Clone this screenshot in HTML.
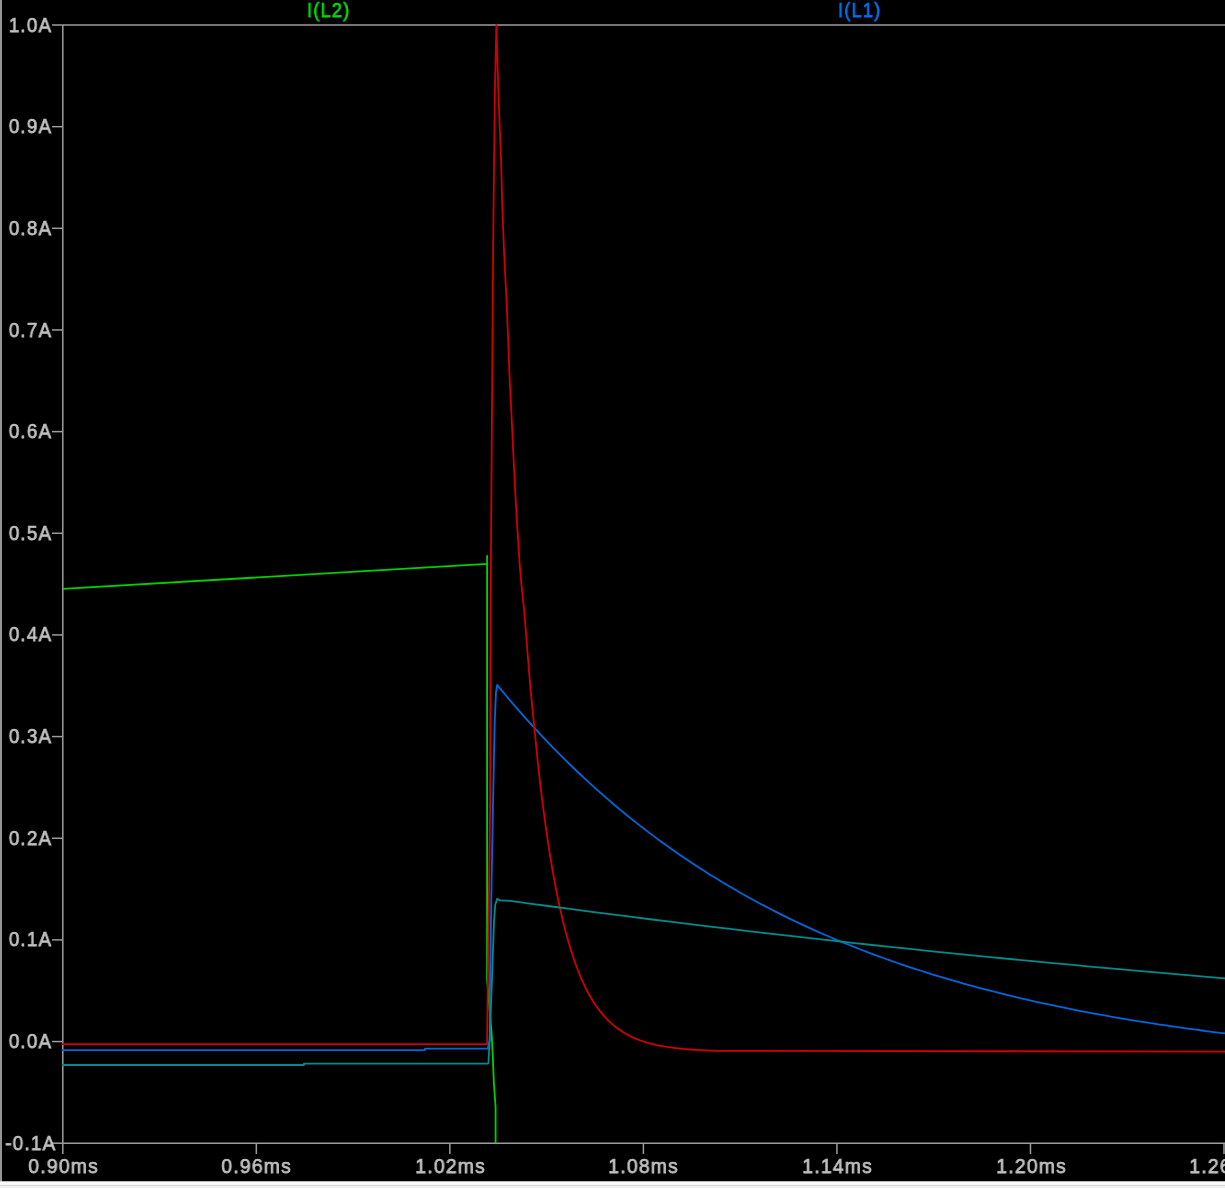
<!DOCTYPE html>
<html><head><meta charset="utf-8"><style>
html,body{margin:0;padding:0;background:#000;width:1225px;height:1188px;overflow:hidden;position:relative}
.yl,.xl,.tl{position:absolute;font-family:"Liberation Sans",sans-serif;font-weight:normal;font-size:21px;line-height:30px;letter-spacing:1.3px;white-space:nowrap;color:#c0c0c0;will-change:transform;-webkit-text-stroke:0.75px #c0c0c0}
.yl{left:0;width:52.3px;text-align:right;transform-origin:100% 50%;transform:scaleX(0.9)}
.xl{top:1151px;width:120px;text-align:center;transform:scaleX(0.92);text-indent:1.3px}
.tl{top:-5px;transform-origin:0 50%;transform:scaleX(0.87);-webkit-text-stroke-color:currentColor}
</style></head><body>
<svg width="1225" height="1188" viewBox="0 0 1225 1188" style="position:absolute;left:0;top:0"><rect x="0" y="0" width="1225" height="1188" fill="#000"/><rect x="0" y="0" width="2" height="1182" fill="#969696"/><rect x="0" y="1181.5" width="1225" height="6.5" fill="#f0f0f0"/><rect x="0" y="1181.5" width="1225" height="3" fill="#fafafa"/><rect x="0" y="1185" width="1225" height="1" fill="#d8d8d8"/><g stroke="#9c9c9c" stroke-width="1.5" fill="none"><line x1="62.8" y1="25.0" x2="1225" y2="25.0"/><line x1="62.8" y1="1143.2" x2="1225" y2="1143.2"/><line x1="62.8" y1="25.0" x2="62.8" y2="1154"/><line x1="52" y1="25.00" x2="62.8" y2="25.00"/><line x1="52" y1="126.65" x2="62.8" y2="126.65"/><line x1="52" y1="228.31" x2="62.8" y2="228.31"/><line x1="52" y1="329.96" x2="62.8" y2="329.96"/><line x1="52" y1="431.62" x2="62.8" y2="431.62"/><line x1="52" y1="533.27" x2="62.8" y2="533.27"/><line x1="52" y1="634.93" x2="62.8" y2="634.93"/><line x1="52" y1="736.58" x2="62.8" y2="736.58"/><line x1="52" y1="838.24" x2="62.8" y2="838.24"/><line x1="52" y1="939.89" x2="62.8" y2="939.89"/><line x1="52" y1="1041.55" x2="62.8" y2="1041.55"/><line x1="52" y1="1143.20" x2="62.8" y2="1143.20"/><line x1="256.33" y1="1143.2" x2="256.33" y2="1154"/><line x1="449.87" y1="1143.2" x2="449.87" y2="1154"/><line x1="643.40" y1="1143.2" x2="643.40" y2="1154"/><line x1="836.93" y1="1143.2" x2="836.93" y2="1154"/><line x1="1030.47" y1="1143.2" x2="1030.47" y2="1154"/><line x1="1224.00" y1="1143.2" x2="1224.00" y2="1154"/></g><g fill="none" stroke-width="1.8" stroke-linejoin="round"><polyline stroke="#00d000" points="62.80,588.90 487.10,563.90 487.10,555.80 487.10,979.80 491.60,1033.60 492.80,1056.00 493.80,1082.00 495.60,1107.00 495.60,1143.00"/><polyline stroke="#0066dc" points="62.00,1050.10 425.00,1050.10 425.00,1048.60 487.70,1048.60 489.80,1040.00 489.80,995.00 490.50,950.00 491.60,880.00 493.30,790.00 494.60,725.00 496.00,692.00 497.20,684.89 500.00,688.31 506.00,695.53 512.00,702.61 518.00,709.56 524.00,716.38 530.00,723.07 536.00,729.64 542.00,736.08 548.00,742.40 554.00,748.60 560.00,754.68 566.00,760.65 572.00,766.51 578.00,772.26 584.00,777.90 590.00,783.43 596.00,788.86 602.00,794.19 608.00,799.42 614.00,804.55 620.00,809.58 626.00,814.52 632.00,819.36 638.00,824.11 644.00,828.78 650.00,833.35 656.00,837.85 662.00,842.25 668.00,846.57 674.00,850.82 680.00,854.98 686.00,859.06 692.00,863.07 698.00,867.00 704.00,870.86 710.00,874.64 716.00,878.36 722.00,882.00 728.00,885.58 734.00,889.09 740.00,892.53 746.00,895.91 752.00,899.22 758.00,902.47 764.00,905.66 770.00,908.79 776.00,911.87 782.00,914.88 788.00,917.84 794.00,920.74 800.00,923.58 806.00,926.38 812.00,929.12 818.00,931.81 824.00,934.45 830.00,937.04 836.00,939.58 842.00,942.07 848.00,944.52 854.00,946.92 860.00,949.27 866.00,951.58 872.00,953.85 878.00,956.07 884.00,958.25 890.00,960.40 896.00,962.50 902.00,964.56 908.00,966.58 914.00,968.57 920.00,970.51 926.00,972.42 932.00,974.30 938.00,976.14 944.00,977.94 950.00,979.72 956.00,981.45 962.00,983.16 968.00,984.83 974.00,986.47 980.00,988.08 986.00,989.66 992.00,991.21 998.00,992.74 1004.00,994.23 1010.00,995.69 1016.00,997.13 1022.00,998.54 1028.00,999.92 1034.00,1001.28 1040.00,1002.61 1046.00,1003.92 1052.00,1005.20 1058.00,1006.46 1064.00,1007.70 1070.00,1008.91 1076.00,1010.10 1082.00,1011.26 1088.00,1012.41 1094.00,1013.53 1100.00,1014.63 1106.00,1015.71 1112.00,1016.77 1118.00,1017.82 1124.00,1018.84 1130.00,1019.84 1136.00,1020.82 1142.00,1021.79 1148.00,1022.73 1154.00,1023.66 1160.00,1024.57 1166.00,1025.47 1172.00,1026.34 1178.00,1027.20 1184.00,1028.05 1190.00,1028.88 1196.00,1029.69 1202.00,1030.49 1208.00,1031.27 1214.00,1032.04 1220.00,1032.79 1225.00,1033.41"/><polyline stroke="#d00000" points="62.00,1044.10 487.10,1044.10 487.60,1000.00 488.50,930.00 490.20,800.00 490.60,600.00 491.70,450.00 493.20,240.00 494.90,90.00 496.40,25.00 497.80,73.50 499.40,118.50 501.10,160.50 502.20,204.00 503.70,243.50 505.20,275.00 506.70,303.50 508.10,338.00 509.60,378.00 511.30,410.50 512.60,438.50 514.00,467.00 515.30,493.00 516.80,519.00 518.30,542.50 519.60,563.50 521.50,585.00 524.30,611.50 527.50,652.00 530.50,689.00 534.40,728.00 538.00,764.30 540.50,786.12 543.00,806.28 545.50,824.91 548.00,842.12 550.50,858.03 553.00,872.74 555.50,886.32 558.00,898.88 560.50,910.49 563.00,921.21 565.50,931.12 568.00,940.28 570.50,948.74 573.00,956.57 575.50,963.79 578.00,970.47 580.50,976.65 583.00,982.35 585.50,987.62 588.00,992.50 590.50,997.00 593.00,1001.16 595.50,1005.01 598.00,1008.56 600.50,1011.84 605.50,1017.68 610.50,1022.67 615.50,1026.93 620.50,1030.57 625.50,1033.67 630.50,1036.33 635.50,1038.59 640.50,1040.53 645.50,1042.18 650.50,1043.59 655.50,1044.80 660.50,1045.83 665.50,1046.71 670.50,1047.46 675.50,1048.10 680.50,1048.65 685.50,1049.11 690.50,1049.51 695.50,1049.85 700.50,1050.15 705.50,1050.39 710.50,1050.61 715.50,1050.79 1225.00,1051.60"/><polyline stroke="#008c8c" points="62.00,1065.00 304.00,1065.00 304.00,1063.60 487.70,1063.60 488.40,1063.00 489.40,1045.00 491.20,1000.00 493.00,950.00 494.00,922.00 495.20,905.00 497.20,898.80 500.00,900.40 510.00,900.78 530.00,903.53 550.00,906.24 570.00,908.92 590.00,911.55 610.00,914.15 630.00,916.71 650.00,919.24 670.00,921.72 690.00,924.18 710.00,926.60 730.00,928.98 750.00,931.33 770.00,933.65 790.00,935.93 810.00,938.18 830.00,940.40 850.00,942.59 870.00,944.74 890.00,946.87 910.00,948.96 930.00,951.03 950.00,953.07 970.00,955.07 990.00,957.05 1010.00,959.00 1030.00,960.92 1050.00,962.82 1070.00,964.69 1090.00,966.53 1110.00,968.35 1130.00,970.14 1150.00,971.90 1170.00,973.64 1190.00,975.35 1210.00,977.04 1225.00,978.29"/></g></svg>
<div class="yl" style="top:9.5px">1.0A</div><div class="yl" style="top:111.2px">0.9A</div><div class="yl" style="top:212.8px">0.8A</div><div class="yl" style="top:314.5px">0.7A</div><div class="yl" style="top:416.1px">0.6A</div><div class="yl" style="top:517.8px">0.5A</div><div class="yl" style="top:619.4px">0.4A</div><div class="yl" style="top:721.1px">0.3A</div><div class="yl" style="top:822.7px">0.2A</div><div class="yl" style="top:924.4px">0.1A</div><div class="yl" style="top:1026.0px">0.0A</div><div class="yl" style="top:1127.7px">-0.1A</div><div class="xl" style="left:2.8px">0.90ms</div><div class="xl" style="left:196.3px">0.96ms</div><div class="xl" style="left:389.9px">1.02ms</div><div class="xl" style="left:583.4px">1.08ms</div><div class="xl" style="left:776.9px">1.14ms</div><div class="xl" style="left:970.5px">1.20ms</div><div class="xl" style="left:1164.0px">1.26ms</div><div class="tl" style="left:307px;color:#00dc00">I(L2)</div><div class="tl" style="left:838px;color:#0070f0">I(L1)</div>
</body></html>
